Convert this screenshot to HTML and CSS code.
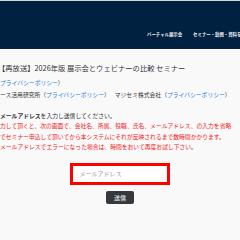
FILE: index.html
```html
<!DOCTYPE html>
<html lang="ja">
    <head>
        <meta charset="UTF-8" />
        <meta name="viewport" content="width=device-width, initial-scale=1.0" />
        <title>展示会とウェビナーの比較 セミナー</title>
        <link rel="stylesheet" href="styles.css">
    </head>
    <body>
        <header class="siteHeader">
            <nav class="mainNav">
                <a href="#">バーチャル展示会</a>
                <a href="#">セミナー・動画・資料を</a>
            </nav>
        </header>

        <main class="content">
            <h1 class="pageTitle">【再放送】2026年版 展示会とウェビナーの比較 セミナー</h1>

            <div class="sponsors">
                <p><a href="#">プライバシーポリシー</a>）</p>
                <p>ース活用研究所（<a href="#">プライバシーポリシー</a>）<span class="sep"></span>マジセミ株式会社（<a href="#">プライバシーポリシー</a>）</p>
            </div>

            <p class="lead"><b>メールアドレス</b>を入力し送信してください。</p>

            <div class="notice">
                <p>力して頂くと、次の画面で、会社名、所属、役職、氏名、メールアドレス、の入力を省略</p>
                <p>でセミナー申込して頂いてから本システムにそれが反映されるまで数時間かかります。</p>
                <p>メールアドレスでエラーになった場合は、時間をおいて再度お試し下さい。</p>
            </div>

            <form class="mailForm" onsubmit="return false;">
                <input type="email" class="mailInput" placeholder="メールアドレス" />
                <button type="submit" class="sendBtn">送信</button>
            </form>
        </main>
    </body>
</html>
```

FILE: styles.css
```css
*,
*::before,
*::after {
    box-sizing: border-box;
}

html,
body {
    margin: 0;
    padding: 0;
    height: 100%;
    overflow: hidden;
    font-family: "Noto Sans CJK JP", "Noto Sans", sans-serif;
    background: #f9f9f9;
    color: #333;
}

/* ヘッダー */
.siteHeader {
    height: 49px;
    border-top: 1px solid #d6d6d6;
    background: #00213f;
    display: flex;
    align-items: flex-end;
}

.mainNav {
    display: flex;
    gap: 11px;
    padding: 0 0 12px 147px;
    white-space: nowrap;
}

.mainNav a {
    color: #e8ecf2;
    font-size: 4.4px;
    font-weight: bold;
    text-decoration: none;
}

/* 本文 */
.content {
    white-space: nowrap;
}

.pageTitle {
    margin: 14px 0 0 -2px;
    font-size: 7.3px;
    font-weight: normal;
    line-height: 10px;
    color: #333;
}

.sponsors {
    margin-top: 4px;
}

.content p {
    margin: 0;
}

.sponsors p {
    font-size: 5.8px;
    line-height: 12px;
}

.sponsors a {
    color: #2a7de1;
    text-decoration: none;
}

.sep {
    display: inline-block;
    width: 5px;
}

.lead {
    margin-top: 9px !important;
    font-size: 5.8px;
    line-height: 11px;
}

.notice p {
    color: #f01818;
    font-size: 5.8px;
    line-height: 10.5px;
}

/* フォーム */
.mailForm {
    width: 240px;
    margin-top: 10px;
    display: flex;
    flex-direction: column;
    align-items: center;
}

.mailInput {
    width: 100px;
    height: 22px;
    margin-left: -1px;
    padding: 0 0 0 7px;
    border: 3px solid #ff0000;
    background: #fff;
    font-family: inherit;
    font-size: 6px;
    outline: none;
}

.mailInput::placeholder {
    color: #999;
}

.sendBtn {
    margin-top: 6px;
    width: 28px;
    height: 13px;
    padding: 0;
    border: none;
    border-radius: 2px;
    background: #343a40;
    color: #fff;
    font-family: inherit;
    font-size: 6px;
    cursor: pointer;
}
```
